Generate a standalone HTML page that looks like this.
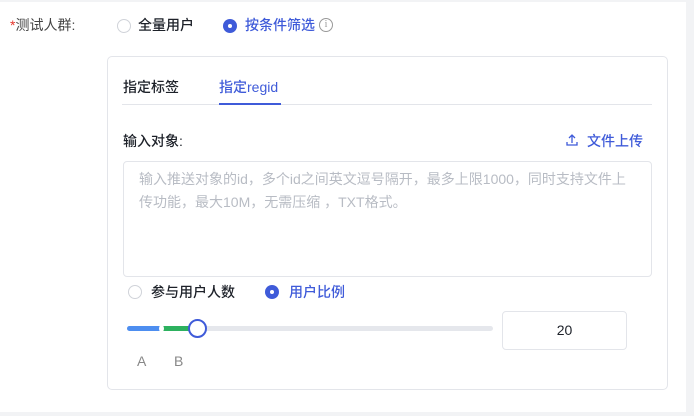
<!DOCTYPE html>
<html><head><meta charset="utf-8"><style>
*{margin:0;padding:0;box-sizing:border-box}
body{width:694px;height:416px;background:#f2f3f5;font-family:"Liberation Sans","Noto Sans CJK SC",sans-serif;position:relative;overflow:hidden;color:#1d2129}
.main{position:absolute;left:0;top:2px;width:686px;height:410px;background:#fff}
.a{position:absolute;white-space:nowrap;font-size:14px;font-weight:500}
.r{position:absolute;width:14px;height:14px;border-radius:50%;border:1px solid #d0d3d9;background:#fff}
.rs{position:absolute;width:14px;height:14px;border-radius:50%;background:#3f5bd9}
.rs:after{content:"";position:absolute;left:5px;top:5px;width:4px;height:4px;border-radius:50%;background:#fff}
</style></head><body>
<div class="main"></div>
<div class="a" style="left:10px;top:15px;color:#444;font-weight:normal"><span style="color:#e5352b">*</span>测试人群:</div>
<div class="r" style="left:117px;top:19px"></div>
<div class="a" style="left:138px;top:15px">全量用户</div>
<div class="rs" style="left:223px;top:19px"></div>
<div class="a" style="left:245px;top:15px;color:#3f5bd9">按条件筛选</div>
<div style="position:absolute;left:319px;top:18px;width:14px;height:14px;border:1px solid #999;border-radius:50%;font-size:10px;color:#999;text-align:center;line-height:12px;font-family:'Liberation Serif',serif">i</div>
<div style="position:absolute;left:107px;top:56px;width:561px;height:334px;border:1px solid #e3e5ea;border-radius:5px;background:#fff"></div>
<div class="a" style="left:123px;top:77px">指定标签</div>
<div class="a" style="left:219px;top:77px;color:#3f5bd9">指定regid</div>
<div style="position:absolute;left:122px;top:104px;width:530px;height:1px;background:#e3e5ea"></div>
<div style="position:absolute;left:219px;top:103px;width:62px;height:2px;background:#3f5bd9"></div>
<div class="a" style="left:123px;top:131px">输入对象:</div>
<svg style="position:absolute;left:565px;top:133px" width="14" height="14" viewBox="0 0 14 14" fill="none" stroke="#3f5bd9" stroke-width="1.3"><path d="M7 10V2M4 5l3-3 3 3M2 9v3h10V9"/></svg>
<div class="a" style="left:587px;top:131px;color:#3f5bd9">文件上传</div>
<div style="position:absolute;left:123px;top:161px;width:529px;height:116px;border:1px solid #e3e5ea;border-radius:4px"></div>
<div class="a" style="left:139px;top:168px;color:#b8bcc4;line-height:23px;white-space:normal;width:500px;font-weight:normal">输入推送对象的id，多个id之间英文逗号隔开，最多上限1000，同时支持文件上传功能，最大10M，无需压缩 ，TXT格式。</div>
<div class="r" style="left:128px;top:285px"></div>
<div class="a" style="left:151px;top:282px">参与用户人数</div>
<div class="rs" style="left:265px;top:285px"></div>
<div class="a" style="left:289px;top:282px;color:#3f5bd9">用户比例</div>
<div style="position:absolute;left:127px;top:326px;width:366px;height:5px;border-radius:3px;background:#e5e7ec"></div>
<div style="position:absolute;left:127px;top:326px;width:36px;height:5px;border-radius:3px;background:#4d8ef0"></div>
<div style="position:absolute;left:161px;top:326px;width:36px;height:5px;background:#2db15f"></div>
<div style="position:absolute;left:159px;top:325px;width:5px;height:7px;border-radius:50%;background:#fff"></div>
<div style="position:absolute;left:188px;top:319px;width:19px;height:19px;border-radius:50%;border:2px solid #3f5bd9;background:#fff"></div>
<div style="position:absolute;left:502px;top:311px;width:125px;height:39px;border:1px solid #e3e5ea;border-radius:4px;font-size:14px;text-align:center;line-height:37px">20</div>
<div class="a" style="left:137px;top:353px;color:#888;font-weight:normal">A</div>
<div class="a" style="left:174px;top:353px;color:#888;font-weight:normal">B</div>
</body></html>
